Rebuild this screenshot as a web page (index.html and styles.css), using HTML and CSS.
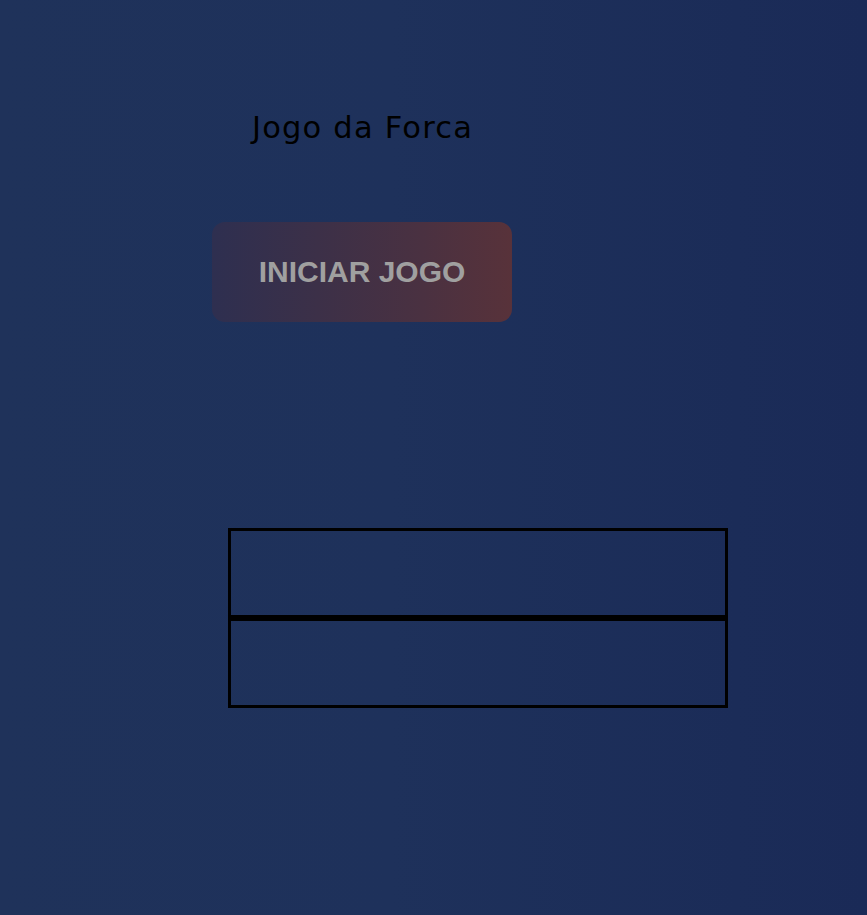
FILE: index.html
```html
<!DOCTYPE html>
<html lang="pt">
<head>
<meta charset="utf-8">
<title>Jogo da Forca</title>
<link rel="stylesheet" href="styles.css">
</head>
<body>
<main class="page">
  <section class="intro">
    <h1 class="title">Jogo da Forca</h1>
    <button class="start-btn" type="button">INICIAR JOGO</button>
  </section>
  <section class="boards">
    <div class="board"></div>
    <div class="board"></div>
  </section>
</main>
</body>
</html>
```
FILE: styles.css
```css
html, body {
  margin: 0;
  padding: 0;
}
body {
  min-height: 915px;
  background: linear-gradient(to right, #1f325a 0%, #1e315b 45%, #1b2c58 85%, #1a2a57 100%);
  font-family: "Liberation Sans", Arial, sans-serif;
}
.page {
  display: flex;
  flex-direction: column;
  padding-top: 108px;
}
.intro {
  width: 300px;
  margin-left: 212px;
  display: flex;
  flex-direction: column;
  align-items: center;
}
.title {
  margin: 0 -1.2px 0 0;
  font-family: "DejaVu Sans", sans-serif;
  font-weight: 400;
  font-size: 30.5px;
  line-height: 40px;
  letter-spacing: 1.2px;
  color: #000;
}
.start-btn {
  margin-top: 74px;
  width: 300px;
  height: 100px;
  border: none;
  border-radius: 13px;
  background: linear-gradient(to right, #2e2f50 0%, #3c3048 35%, #4a3141 70%, #58323a 100%);
  color: #a0a0a0;
  font-family: "Liberation Sans", Arial, sans-serif;
  font-weight: 700;
  font-size: 30px;
  padding: 0;
}
.boards {
  margin-top: 206px;
  margin-left: 228px;
  display: flex;
  flex-direction: column;
}
.board {
  box-sizing: border-box;
  width: 500px;
  height: 90px;
  border: 3px solid #000;
}
```
